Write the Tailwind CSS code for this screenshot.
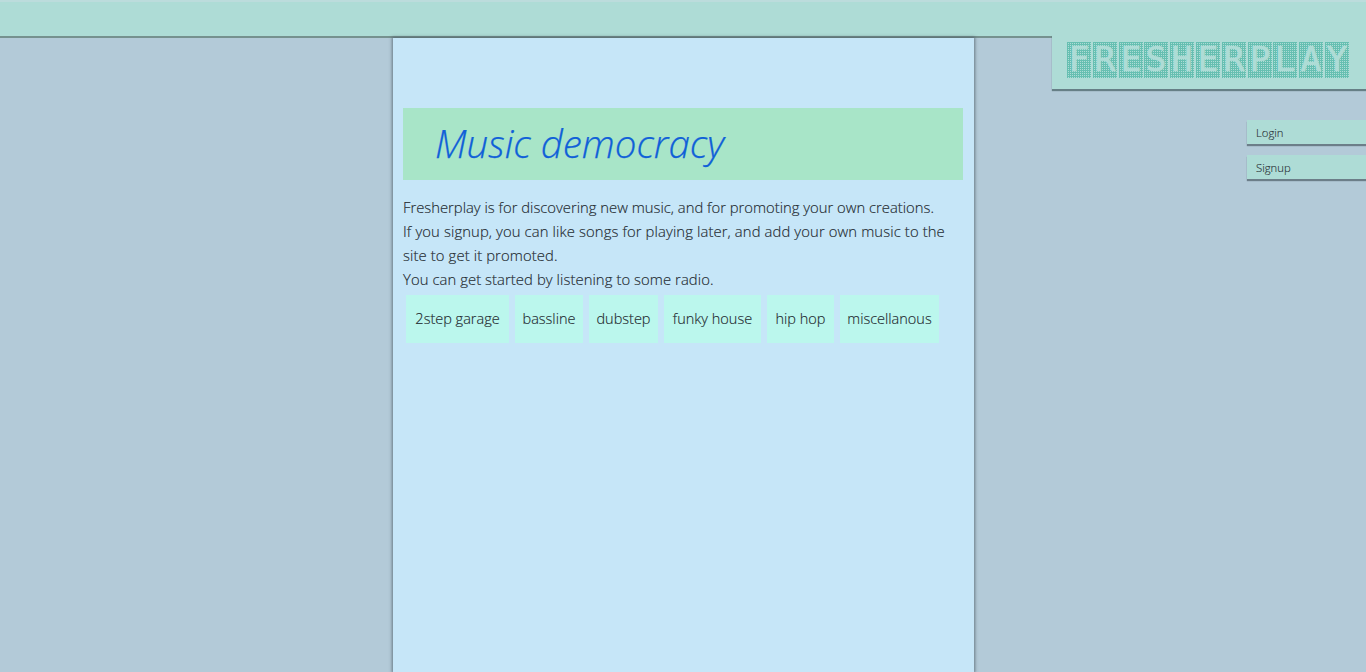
<!DOCTYPE html>
<html>
<head>
<meta charset="utf-8">
<script src="https://cdn.jsdelivr.net/npm/@tailwindcss/browser@4"></script>
</head>
<body class="h-[672px] overflow-hidden bg-[#b3cad8] font-['Open_Sans','Noto_Sans',sans-serif] font-light text-[#1f2a30]">
<div class="relative h-[672px] overflow-hidden">
  <header class="h-[38px] border-t-2 border-b-2 border-t-[#bcdcdc] border-b-[#76918f] bg-[#aedcd6]"></header>
  <main class="relative ml-[393px] h-[634px] w-[581px] bg-[#c6e6f8] pt-[70px] pr-[11px] pl-[10px] shadow-[0_0_3px_1px_rgba(70,85,95,0.7)]">
    <h1 class="flex h-[72px] items-center bg-[#a8e5c8] pl-[32px] text-[38.5px] font-light italic text-[#1060d8] [-webkit-text-stroke:0.25px]">Music democracy</h1>
    <div class="mt-[15px] text-[14.8px] leading-6 [-webkit-text-stroke:0.15px]">
      <p class="w-[550px]">Fresherplay is for discovering new music, and for promoting your own creations.<br><span class="tracking-[0.12px]">If you signup, you can like songs for playing later, and add your own music to the site to get it promoted.</span><br><span class="tracking-[0.08px]">You can get started by listening to some radio.</span></p>
      <div class="mt-1 ml-[3px] flex gap-[6px] text-[14.5px]">
        <span class="flex h-12 w-[103px] items-center justify-center bg-[#bbf7ed]">2step garage</span>
        <span class="flex h-12 w-[68px] items-center justify-center bg-[#bbf7ed]">bassline</span>
        <span class="flex h-12 w-[69px] items-center justify-center bg-[#bbf7ed]">dubstep</span>
        <span class="flex h-12 w-[97px] items-center justify-center bg-[#bbf7ed]">funky house</span>
        <span class="flex h-12 w-[67px] items-center justify-center bg-[#bbf7ed]">hip hop</span>
        <span class="flex h-12 w-[99px] items-center justify-center bg-[#bbf7ed]">miscellanous</span>
      </div>
    </div>
  </main>
  <div class="absolute right-0 top-[34px] flex h-[55px] w-[314px] items-start gap-[1.8px] bg-[#aedcd6] pl-[15px] pt-2 shadow-[0_2px_1px_rgba(70,95,100,0.7)]">
    <span class="h-9 w-6 bg-[linear-gradient(90deg,#66bfb1_50%,transparent_50%),linear-gradient(#66bfb1_50%,transparent_50%)] bg-size-[2px_2px] text-center font-['DejaVu_Sans_Mono',monospace] text-[33px] leading-9 font-normal text-[#aedcd6] [-webkit-text-stroke:0.7px]"><span class="inline-block scale-x-[1.05]">F</span></span>
    <span class="h-9 w-6 bg-[linear-gradient(90deg,#66bfb1_50%,transparent_50%),linear-gradient(#66bfb1_50%,transparent_50%)] bg-size-[2px_2px] text-center font-['DejaVu_Sans_Mono',monospace] text-[33px] leading-9 font-normal text-[#aedcd6] [-webkit-text-stroke:0.7px]"><span class="inline-block scale-x-[1.05]">R</span></span>
    <span class="h-9 w-6 bg-[linear-gradient(90deg,#66bfb1_50%,transparent_50%),linear-gradient(#66bfb1_50%,transparent_50%)] bg-size-[2px_2px] text-center font-['DejaVu_Sans_Mono',monospace] text-[33px] leading-9 font-normal text-[#aedcd6] [-webkit-text-stroke:0.7px]"><span class="inline-block scale-x-[1.05]">E</span></span>
    <span class="h-9 w-6 bg-[linear-gradient(90deg,#66bfb1_50%,transparent_50%),linear-gradient(#66bfb1_50%,transparent_50%)] bg-size-[2px_2px] text-center font-['DejaVu_Sans_Mono',monospace] text-[33px] leading-9 font-normal text-[#aedcd6] [-webkit-text-stroke:0.7px]"><span class="inline-block scale-x-[1.05]">S</span></span>
    <span class="h-9 w-6 bg-[linear-gradient(90deg,#66bfb1_50%,transparent_50%),linear-gradient(#66bfb1_50%,transparent_50%)] bg-size-[2px_2px] text-center font-['DejaVu_Sans_Mono',monospace] text-[33px] leading-9 font-normal text-[#aedcd6] [-webkit-text-stroke:0.7px]"><span class="inline-block scale-x-[1.05]">H</span></span>
    <span class="h-9 w-6 bg-[linear-gradient(90deg,#66bfb1_50%,transparent_50%),linear-gradient(#66bfb1_50%,transparent_50%)] bg-size-[2px_2px] text-center font-['DejaVu_Sans_Mono',monospace] text-[33px] leading-9 font-normal text-[#aedcd6] [-webkit-text-stroke:0.7px]"><span class="inline-block scale-x-[1.05]">E</span></span>
    <span class="h-9 w-6 bg-[linear-gradient(90deg,#66bfb1_50%,transparent_50%),linear-gradient(#66bfb1_50%,transparent_50%)] bg-size-[2px_2px] text-center font-['DejaVu_Sans_Mono',monospace] text-[33px] leading-9 font-normal text-[#aedcd6] [-webkit-text-stroke:0.7px]"><span class="inline-block scale-x-[1.05]">R</span></span>
    <span class="h-9 w-6 bg-[linear-gradient(90deg,#66bfb1_50%,transparent_50%),linear-gradient(#66bfb1_50%,transparent_50%)] bg-size-[2px_2px] text-center font-['DejaVu_Sans_Mono',monospace] text-[33px] leading-9 font-normal text-[#aedcd6] [-webkit-text-stroke:0.7px]"><span class="inline-block scale-x-[1.05]">P</span></span>
    <span class="h-9 w-6 bg-[linear-gradient(90deg,#66bfb1_50%,transparent_50%),linear-gradient(#66bfb1_50%,transparent_50%)] bg-size-[2px_2px] text-center font-['DejaVu_Sans_Mono',monospace] text-[33px] leading-9 font-normal text-[#aedcd6] [-webkit-text-stroke:0.7px]"><span class="inline-block scale-x-[1.05]">L</span></span>
    <span class="h-9 w-6 bg-[linear-gradient(90deg,#66bfb1_50%,transparent_50%),linear-gradient(#66bfb1_50%,transparent_50%)] bg-size-[2px_2px] text-center font-['DejaVu_Sans_Mono',monospace] text-[33px] leading-9 font-normal text-[#aedcd6] [-webkit-text-stroke:0.7px]"><span class="inline-block scale-x-[1.05]">A</span></span>
    <span class="h-9 w-6 bg-[linear-gradient(90deg,#66bfb1_50%,transparent_50%),linear-gradient(#66bfb1_50%,transparent_50%)] bg-size-[2px_2px] text-center font-['DejaVu_Sans_Mono',monospace] text-[33px] leading-9 font-normal text-[#aedcd6] [-webkit-text-stroke:0.7px]"><span class="inline-block scale-x-[1.05]">Y</span></span>
  </div>
  <nav class="absolute right-0 top-[120px] flex w-[119px] flex-col gap-[11px] text-[11.3px] [-webkit-text-stroke:0.1px]">
    <a class="flex h-6 items-center bg-[#aedcd6] pt-[2px] pl-[9px] shadow-[0_2px_1px_rgba(60,75,85,0.6)]">Login</a>
    <a class="flex h-6 items-center bg-[#aedcd6] pt-[2px] pl-[9px] shadow-[0_2px_1px_rgba(60,75,85,0.6)]">Signup</a>
  </nav>
</div>
</body>
</html>
